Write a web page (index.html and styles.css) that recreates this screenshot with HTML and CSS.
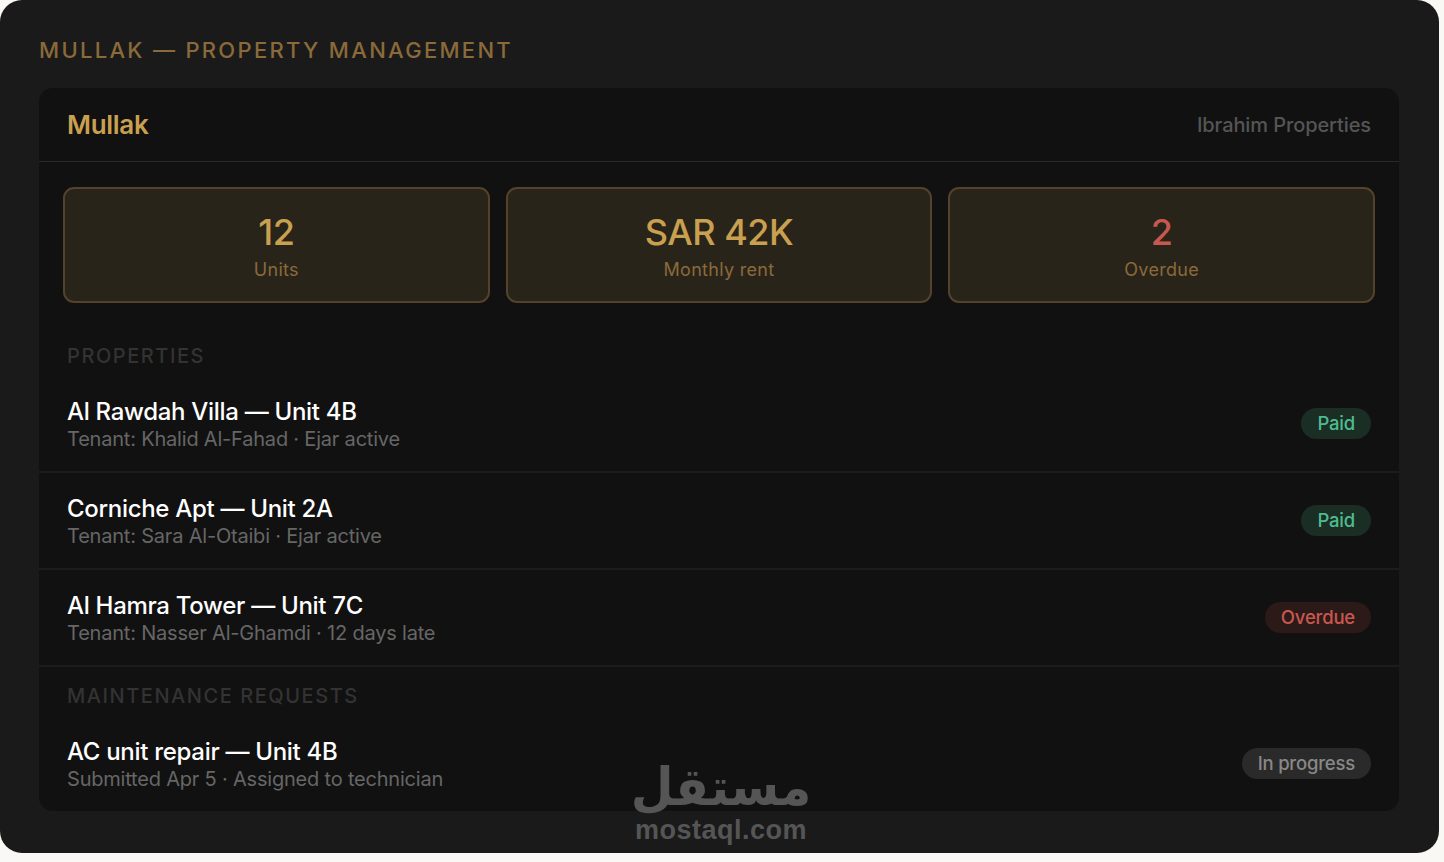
FILE: index.html
```html
<!DOCTYPE html>
<html lang="en">
<head>
    <meta charset="UTF-8">
    <meta name="viewport" content="width=device-width, initial-scale=1.0">
    <title>Mullak — Property Management</title>
    <link rel="stylesheet" href="styles.css">
</head>
<body>
    <div class="frame">
        <div class="eyebrow">Mullak — Property Management</div>
        <div class="panel">
            <div class="topbar">
                <span class="brand">Mullak</span>
                <span class="owner">Ibrahim Properties</span>
            </div>
            <div class="stats">
                <div class="stat">
                    <div class="stat-value">12</div>
                    <div class="stat-label">Units</div>
                </div>
                <div class="stat">
                    <div class="stat-value">SAR 42K</div>
                    <div class="stat-label">Monthly rent</div>
                </div>
                <div class="stat">
                    <div class="stat-value red">2</div>
                    <div class="stat-label">Overdue</div>
                </div>
            </div>

            <div class="section-title first">Properties</div>
            <div class="row">
                <div class="row-text">
                    <div class="row-name">Al Rawdah Villa — Unit 4B</div>
                    <div class="row-sub">Tenant: Khalid Al-Fahad · Ejar active</div>
                </div>
                <span class="badge paid">Paid</span>
            </div>
            <div class="row">
                <div class="row-text">
                    <div class="row-name">Corniche Apt — Unit 2A</div>
                    <div class="row-sub">Tenant: Sara Al-Otaibi · Ejar active</div>
                </div>
                <span class="badge paid">Paid</span>
            </div>
            <div class="row">
                <div class="row-text">
                    <div class="row-name">Al Hamra Tower — Unit 7C</div>
                    <div class="row-sub">Tenant: Nasser Al-Ghamdi · 12 days late</div>
                </div>
                <span class="badge overdue">Overdue</span>
            </div>

            <div class="section-title">Maintenance requests</div>
            <div class="row last">
                <div class="row-text">
                    <div class="row-name">AC unit repair — Unit 4B</div>
                    <div class="row-sub">Submitted Apr 5 · Assigned to technician</div>
                </div>
                <span class="badge progress">In progress</span>
            </div>
        </div>

        <div class="watermark">
            <div class="wm-ar" lang="ar" dir="rtl">مستقل</div>
            <div class="wm-en">mostaql.com</div>
        </div>
    </div>
</body>
</html>
```

FILE: styles.css
```css
* {
    box-sizing: border-box;
}
html, body {
    margin: 0;
    height: 100%;
}
body {
    background: #f9f8f4;
    font-family: Inter, "Liberation Sans", sans-serif;
}
.frame {
    position: relative;
    width: 1439px;
    height: 853px;
    padding: 38px 40px 42px 39px;
    background: #1a1a1a;
    border-radius: 22px;
}
.eyebrow {
    height: 50px;
    font-size: 22px;
    line-height: 25px;
    font-weight: 500;
    letter-spacing: 2.3px;
    text-transform: uppercase;
    color: #8a6a3a;
}
.panel {
    height: 723px;
    background: #111111;
    border-radius: 14px;
    overflow: hidden;
}
.topbar {
    display: flex;
    justify-content: space-between;
    align-items: center;
    height: 74px;
    padding: 0 28px;
    border-bottom: 1px solid #2a2a2a;
}
.brand {
    font-size: 26px;
    font-weight: 600;
    letter-spacing: -0.3px;
    color: #c9a050;
}
.owner {
    font-size: 20px;
    font-weight: 500;
    letter-spacing: -0.1px;
    color: #555555;
}
.stats {
    display: grid;
    grid-template-columns: repeat(3, 1fr);
    gap: 16px;
    padding: 25px 24px 24px;
}
.stat {
    height: 116px;
    padding-top: 21px;
    text-align: center;
    background: #29241a;
    border: 2px solid #54422a;
    border-radius: 11px;
}
.stat-value {
    margin-bottom: 4px;
    font-size: 36px;
    line-height: 44px;
    font-weight: 500;
    letter-spacing: -0.5px;
    color: #c9a050;
}
.stat-value.red {
    color: #c8584f;
}
.stat-label {
    font-size: 18px;
    line-height: 24px;
    letter-spacing: 0.3px;
    color: #8a6a3a;
}
.section-title {
    padding: 19px 28px 9px;
    font-size: 20px;
    line-height: 20px;
    font-weight: 500;
    letter-spacing: 1.55px;
    text-transform: uppercase;
    color: #333333;
}
.section-title.first {
    padding-bottom: 10px;
}
.row {
    display: flex;
    justify-content: space-between;
    align-items: center;
    height: 97px;
    padding: 0 28px;
    border-bottom: 2px solid #1c1c1c;
}
.row.last {
    border-bottom: none;
}
.row-text {
    padding-top: 2px;
}
.row-name {
    font-size: 24px;
    line-height: 28px;
    font-weight: 500;
    letter-spacing: -0.3px;
    color: #ffffff;
}
.row-sub {
    font-size: 20px;
    line-height: 26px;
    letter-spacing: -0.2px;
    color: #666666;
}
.badge {
    height: 31px;
    padding: 0 16px;
    font-size: 18.5px;
    line-height: 31px;
    font-weight: 500;
    letter-spacing: -0.2px;
    border-radius: 16px;
}
.paid {
    background: #1a2e25;
    color: #4fbb8d;
}
.overdue {
    background: #2c1a18;
    color: #c8584f;
}
.progress {
    background: #2a2a2a;
    color: #888888;
}
.watermark {
    position: absolute;
    left: 621px;
    top: 757px;
    display: flex;
    flex-direction: column;
    align-items: center;
    width: 200px;
    color: #555555;
}
.wm-ar {
    font-family: "DejaVu Sans", sans-serif;
    font-size: 52px;
    line-height: 60px;
    font-weight: 700;
    white-space: nowrap;
    transform: scaleX(0.95);
}
.wm-en {
    font-family: "Liberation Sans", sans-serif;
    font-size: 27px;
    line-height: 26px;
    font-weight: 700;
    letter-spacing: 0.5px;
}
```
